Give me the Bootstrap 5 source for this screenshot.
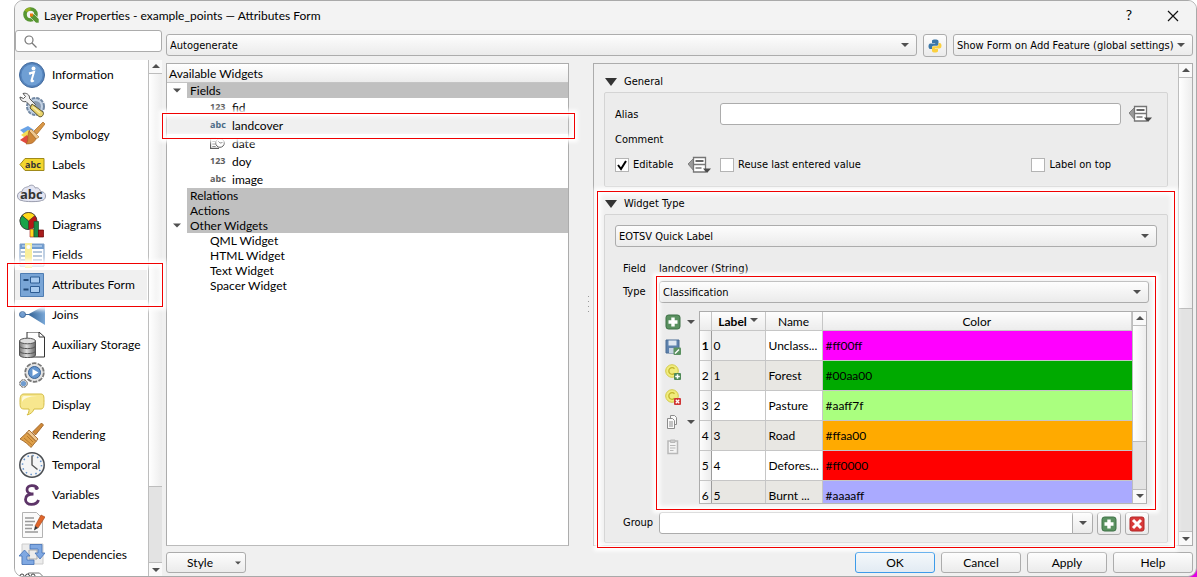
<!DOCTYPE html>
<html lang="en">
<head>
<meta charset="utf-8">
<meta name="viewport" content="width=device-width, initial-scale=1">
<title>Layer Properties - example_points — Attributes Form</title>
<link href="https://cdn.jsdelivr.net/npm/bootstrap@5.3.0/dist/css/bootstrap.min.css" rel="stylesheet">
<style>
  :root {
    --ui-font: Lato, "Open Sans", sans-serif;
    --shell-font: "DejaVu Sans Condensed", "DejaVu Sans", sans-serif;
    --line: #acacac;
    --face: #f0f0f0;
    --caret: url("data:image/svg+xml,%3Csvg xmlns='http://www.w3.org/2000/svg' viewBox='0 0 8 4'%3E%3Cpath d='M0 0h8L4 4z' fill='%23505050'/%3E%3C/svg%3E");
  }
  body {
    font: 12px/15px var(--ui-font);
    color: #000;
    background: #fff linear-gradient(#e400e4, #e400e4) right bottom / 12px 16px no-repeat;
  }
  button, input, select { font: inherit; color: inherit; }
  a { color: #000; text-decoration: none; }

  .dialog-window {
    margin-left: 14px;
    background: var(--face);
    border: 1px solid #a9a9a9;
    border-radius: 9px;
  }
  .title-bar { height: 30px; background: #f3f3f3; border-radius: 8px 8px 0 0; padding: 0 17px 0 8px; gap: 5px; }
  .title-bar h1 { font: 12px/15px var(--ui-font); }
  .title-bar .help-btn { font-size: 14px; margin-right: 30px; }
  .title-bar button, .plain-btn { background: none; border: 0; padding: 0; line-height: 1; }

  /* annotation frames laid over the interface */
  .marked { position: relative; z-index: 2; }
  .marked::after {
    content: "";
    position: absolute;
    inset: var(--out, 0);
    border: 1px solid #f00000;
    box-shadow: 0 0 4px 3px #fff, inset 0 0 4px 3px #fff;
    pointer-events: none;
  }

  /* controls */
  .form-select, .form-control, .push-btn {
    border: 1px solid var(--line);
    border-radius: 3px;
    font-size: 11px;
    line-height: 14px;
    color: #000;
  }
  .form-select, .push-btn { background-color: #f4f4f4; background-image: linear-gradient(#fdfdfd, #ebebeb); }
  .form-select {
    font-family: var(--shell-font);
    height: 22px;
    padding: 4px 16px 2px 3px;
    background-image: var(--caret), linear-gradient(#fdfdfd, #ebebeb);
    background-position: right 7px center, 0 0;
    background-size: 8px 4px, 100% 100%;
    background-repeat: no-repeat;
  }
  .form-control { height: 22px; padding: 3px 4px; background: #fff; }
  .push-btn { height: 21px; width: 80px; padding: 0; font: 12px/15px var(--ui-font); }
  .push-btn.is-default { border-color: #3d9be9; background-image: linear-gradient(#f4f8fb, #e2ebf3); }
  .push-btn.tool-btn { width: 24px; height: 23px; flex: none; }
  .push-btn.drop-btn { width: 21px; height: 22px; line-height: 0; }
  .tick {
    width: 14px; height: 14px; margin: 0; flex: none;
    appearance: none; background: #fff center / 12px no-repeat; border: 1px solid #b4b4b4;
  }
  .tick:checked { background-image: url("data:image/svg+xml,%3Csvg xmlns='http://www.w3.org/2000/svg' viewBox='0 0 12 12'%3E%3Cpath d='M2 6l3 4 5-8' fill='none' stroke='%23000' stroke-width='2'/%3E%3C/svg%3E"); }

  /* scroll bars */
  .scroll-rail { width: 14px; flex: none; background: #e3e3e3; border-left: 1px solid #bdbdbd; }
  .scroll-rail button { height: 14px; background: #f9f9f9; border: 0; padding: 0; line-height: 0; flex: none; }
  .scroll-rail .up { border-bottom: 1px solid #bdbdbd; }
  .scroll-rail .down { border-top: 1px solid #bdbdbd; }
  .scroll-rail .thumb { background: linear-gradient(90deg, #fff, #ededed); border-bottom: 1px solid #bdbdbd; }
  .scroll-rail svg { width: 8px; height: 4px; fill: #505050; }

  /* page list */
  .side-column { width: 147px; flex: none; }
  .search-field { position: relative; }
  .search-field svg { position: absolute; left: 9px; top: 5px; }
  .search-field .form-control { padding-left: 26px; }
  .page-list { background: #fff; overflow-x: visible; overflow-y: clip; border-radius: 0 0 0 8px; }
  .page-list a { height: 30px; padding-left: 4px; gap: 7px; white-space: nowrap; }
  .page-list a svg { width: 26px; height: 26px; flex: none; }
  .page-list .active-page { background: var(--face); margin-right: 1px; --out: -7px -16px -7px -8px; }

  /* widget tree */
  .main-area { min-width: 0; padding: 4px 3px 3px 4px; }
  .toolbar-row { margin-bottom: 6px; }
  .add-form { width: 240px; flex: none; }
  .py-btn { margin: 0 6px; }
  .tree-pane { width: 403px; flex: none; background: #fff; border: 1px solid var(--line); border-bottom-color: #bbb; }
  .tree-head { height: 19px; padding: 2px 2px 0; background: linear-gradient(#fff, #ececec); border-bottom: 1px solid #c4c4c4; line-height: 16px; }
  .tree-pane ul { list-style: none; margin: 0; padding: 0; }
  .branch { margin-left: 20px; padding-left: 3px; background: #c0c0c0; position: relative; }
  .branch svg { position: absolute; left: -14px; top: 5px; width: 8px; height: 5px; fill: #505050; }
  .leaf-field { height: 18px; padding: 1px 0 0 43px; }
  .leaf-field .kind { width: 22px; font: bold 9px/16px "Open Sans", sans-serif; color: #5e5e5e; }
  .leaf-field .kind svg { display: block; }
  .leaf-field.marked { background: var(--face); --out: -3px -7px -5px -5px; }
  .leaf-field.marked .kind { color: #4a6a86; }
  .leaf-plain { padding-left: 43px; }
  .splitter { width: 24px; flex: none; }
  .splitter i { width: 1px; height: 1px; background: #999; }

  /* form pane */
  .form-pane { font: 11px/14px var(--shell-font); border: 1px solid var(--line); color: #000; }
  .form-body { padding: 9px 10px 0 10px; }
  .group-title { height: 19px; padding-left: 1px; gap: 7px; }
  .group-frame { border: 1px solid #d4d4d4; border-radius: 2px; background: #ececec; padding: 10px 10px 12px; }
  .type-frame { padding-bottom: 7px; }
  .comment-line { margin: 8px 0 9px; }
  .field-line { margin: 15px 0 5px; }
  .widget-group { --out: -4px -7px -5px -7px; }
  .classes { --out: -5px -7px -6px -3px; }
  .indented { padding: 0 8px; }
  .caption { width: 36px; flex: none; }
  .type-cap { padding-top: 4px; }
  .alias-cap { width: 105px; flex: none; }
  label.alias-cap { padding-top: 2px; }
  .ontop-cap { margin-right: 46px; }
  .tool-strip { width: 40px; flex: none; padding-left: 6px; }
  .tool-strip > div { height: 25px; padding-top: 3px; gap: 6px; }
  .tool-strip svg { display: block; flex: none; }
  .tool-strip .drop-mark { margin-top: 6px; }
  .grid-view { height: 193px; min-width: 0; border: 1px solid var(--line); background: #fff; overflow: hidden; margin-right: 2px; }
  .grid-view table { font: 12px/15px var(--ui-font); table-layout: fixed; border-collapse: collapse; width: 100%; }
  .grid-view th, .grid-view td { border-right: 1px solid #c6c6c6; border-bottom: 1px solid #c6c6c6; padding: 0 2px; height: 30px; white-space: nowrap; }
  .grid-view thead th { height: 19px; font-weight: 400; text-align: center; background: linear-gradient(#fdfdfd, #ececec); }
  .grid-view tbody th { font-weight: 400; text-align: center; padding: 0; background: linear-gradient(90deg, #fdfdfd, #ececec); border-right-color: #9c9c9c; }
  .grid-view td:nth-child(3) { padding: 0 3px; }
  .grid-view tbody tr:nth-child(even) td { background: #e8e7e3; }
  .grid-view tbody td.swatch, .grid-view tbody tr:nth-child(even) td.swatch { background: var(--c); border-right: 0; padding-left: 3px; }
  .grid-view .col-num { width: 11px; }
  .grid-view .col-label { width: 54px; }
  .grid-view .col-name { width: 57px; }
  .first-cell { background: var(--face); }
  .push-row { padding-top: 6px; gap: 6px; }
  .style-btn { gap: 22px; }
</style>
</head>
<body class="vh-100 overflow-hidden">

<svg class="position-absolute" width="0" height="0" aria-hidden="true">
  <defs>
    <linearGradient id="gGrey" x1="0" y1="0" x2="1" y2="0"><stop offset="0" stop-color="#777"/><stop offset=".45" stop-color="#ddd"/><stop offset="1" stop-color="#666"/></linearGradient>
    <linearGradient id="gJoin" x1="0" y1="0" x2="1" y2="0"><stop offset="0" stop-color="#2f5f92"/><stop offset="1" stop-color="#7aa8d8"/></linearGradient>
  </defs>
  <symbol id="caret" viewBox="0 0 8 4"><path d="M0 0h8L4 4z"/></symbol>
  <symbol id="caretUp" viewBox="0 0 8 4"><path d="M0 4h8L4 0z"/></symbol>
  <symbol id="plus" viewBox="0 0 16 16"><rect x="1" y="1" width="14" height="14" rx="2.5" fill="#5a9160" stroke="#3c7044"/><path d="M8 3.500v9M3.500 8h9" stroke="#fff" stroke-width="3.400"/></symbol>
  <symbol id="override" viewBox="0 0 24 18"><path d="M0 8l6-6v13z" fill="#9a9a9a" stroke="#707070" stroke-width=".8"/><path d="M5.500 1.500h12v14.500h-12z" fill="#fff" stroke="#757575" stroke-width="1.300"/><path d="M7.500 5h8" stroke="#555" stroke-width="1.800"/><path d="M5.500 8.500h12M7.500 12h6" stroke="#777" stroke-width="1.300"/><path d="M15 12.500h8l-4 4.500z" fill="#4a4a4a"/></symbol>
</svg>

<main class="dialog-window vh-100 d-flex flex-column">
  <header class="title-bar d-flex align-items-center">
    <svg width="16" height="16" viewBox="0 0 16 16"><circle cx="7.500" cy="7.500" r="5.500" fill="none" stroke="#589632" stroke-width="3.600"/><path d="M3 4.500A5.500 5.500 0 0 1 7.500 2" fill="none" stroke="#93b023" stroke-width="3"/><path d="M7 7h4l5 5v4h-3L7 10z" fill="#589632" stroke="#f3f3f3" stroke-width=".6"/><path d="M7 6.500h3v3H7z" fill="#ee7913"/></svg>
    <h1 class="m-0">Layer Properties - example_points — Attributes Form</h1>
    <button type="button" class="help-btn ms-auto" aria-label="Help">?</button>
    <button type="button" aria-label="Close"><svg width="12" height="12" viewBox="0 0 12 12"><path d="M1 1l10 10M11 1L1 11" stroke="#111" stroke-width="1.200"/></svg></button>
  </header>

  <div class="d-flex flex-fill" style="min-height:0">
    <!-- pages -->
    <nav class="side-column d-flex flex-column" aria-label="Pages">
      <div class="search-field">
        <svg width="13" height="13" viewBox="0 0 13 13" fill="none" stroke="#777" stroke-width="1.200"><circle cx="5" cy="5" r="4"/><path d="M8 8l4.500 4.500"/></svg>
        <input type="search" class="form-control" aria-label="Search">
      </div>
      <div class="d-flex flex-fill mt-1 pt-1" style="min-height:0">
        <div class="page-list flex-fill">
          <a href="#" class="d-flex align-items-center"><svg viewBox="0 0 26 26"><circle cx="13" cy="13" r="12.500" fill="#5584bd" stroke="#41699c"/><circle cx="13" cy="13" r="10.500" fill="#6f9fd4"/><circle cx="14.500" cy="6.500" r="2" fill="#fff"/><path d="M10 11.500l5-1.500-2.500 8.500c-.3 1.300 1 1 2.200-.3M10 11.500l2 .3" fill="none" stroke="#fff" stroke-width="2"/></svg>Information</a>
          <a href="#" class="d-flex align-items-center"><svg viewBox="0 0 26 26"><circle cx="16.500" cy="14.500" r="8.500" fill="#c3d2e4" stroke="#7288a3" stroke-width="2" stroke-dasharray="3.500 1"/><circle cx="16.500" cy="14.500" r="5.500" fill="#8a9bb0"/><path d="M4 1.500c3-1 7 1 6.500 5l6 6-3.500 3-6-6C4 10.500 1 8 1 5l3.500 1.500 2-2z" fill="#f2f2f2" stroke="#555"/><path d="M13 12l11 8c1.500 2-1 6-4 4.500L11 16z" fill="#e9d36b" stroke="#5e5630"/><path d="M14 15l7 6" stroke="#f8ecac" stroke-width="1.500"/></svg>Source</a>
          <a href="#" class="d-flex align-items-center"><svg viewBox="0 0 26 26"><path d="M1 8l8-4 6 4-7 6z" fill="#6aa3e6"/><path d="M2 13l7-5 6 4-6 6z" fill="#f3dd55"/><path d="M1 18l7-5 6 8-6 1z" fill="#e04a3f"/><path d="M24 0l2 2-8 10-3-3z" fill="#d99747" stroke="#a76a24" stroke-width=".7"/><path d="M12 7l8 8-3 2-7-8z" fill="#f0c890" stroke="#a76a24" stroke-width=".6"/><path d="M10 9l7 8c-2 4-5 5-10 5 3-3 1-8 3-13z" fill="#cf8638" stroke="#9a5f20" stroke-width=".6"/></svg>Symbology</a>
          <a href="#" class="d-flex align-items-center"><svg viewBox="0 0 26 26"><path d="M1 12.500L6 6.500h19v12H6z" fill="#f2d62e" stroke="#a08a1a"/><text x="6" y="15.500" font-family="Open Sans" font-weight="700" font-size="9" fill="#333">abc</text></svg>Labels</a>
          <a href="#" class="d-flex align-items-center"><svg viewBox="0 0 26 26" overflow="visible"><path d="M3 18.500c-6 0-6-9 0-9 1-5 6-4 7-5.500 3-2 6 0 6 2 3-1 5 1 5.500 3.500 7 0 6 9 1 9-2 1.500-17 1.500-19.500 0z" fill="#e3e5f2" stroke="#9a9dae"/><text x="1" y="16.500" font-family="Open Sans" font-weight="700" font-size="13" fill="#333">abc</text></svg>Masks</a>
          <a href="#" class="d-flex align-items-center"><svg viewBox="0 0 26 26"><circle cx="9.500" cy="9" r="8.500" fill="#b81717" stroke="#333" stroke-width=".8"/><path d="M9.500 9L3 3.500A8.500 8.500 0 0 1 16 3.500z" fill="#ffd91c" stroke="#333" stroke-width=".6"/><path d="M9.500 9L3 3.500A8.500 8.500 0 0 0 9.500 17.500z" fill="#19a34a" stroke="#333" stroke-width=".6"/><path d="M11 17h4v8h-4z" fill="#ffd91c" stroke="#a33" stroke-width=".7"/><path d="M15 9.500h4.500V25H15z" fill="#1c8b46" stroke="#14532b" stroke-width=".7"/><path d="M19.500 18h5v7h-5z" fill="#a81c1c" stroke="#600" stroke-width=".7"/></svg>Diagrams</a>
          <a href="#" class="d-flex align-items-center"><svg viewBox="0 0 26 26"><path d="M1 2h24v22H1z" fill="#fff"/><path d="M1 2h24v5H1z" fill="#6f9cd0"/><path d="M3 4h20" stroke="#b7d0ec" stroke-width="1.500"/><path d="M2 10h5M14 10h9M2 14h5M14 14h9M2 18h5M14 18h9M2 22h5M14 22h9" stroke="#6c8fb8"/><path d="M1 2h24v22H1z" fill="none" stroke="#7f9fc6"/><path d="M6 1h7v25H6z" fill="#f9ee9b"/><circle cx="9.500" cy="5" r="2" fill="#fff"/></svg>Fields</a>
          <a href="#" class="d-flex align-items-center active-page marked" aria-current="page"><svg viewBox="0 0 26 26"><path d="M1.500 1.500h23v23h-23z" fill="#79a5d6" stroke="#4f7db2"/><path d="M11.500 5h9v6h-9zM11.500 14.500h9v6h-9z" fill="#a9cbef" stroke="#2d5c93"/><path d="M4.500 8h5M4.500 17.500h5" stroke="#234a78" stroke-width="2"/></svg>Attributes Form</a>
          <a href="#" class="d-flex align-items-center"><svg viewBox="0 0 26 26"><circle cx="3.500" cy="12.500" r="3" fill="#6f9cd0" stroke="#426b9a"/><path d="M6 12.500h5" stroke="#426b9a"/><path d="M9 12.500L26 3v20z" fill="url(#gJoin)"/></svg>Joins</a>
          <a href="#" class="d-flex align-items-center"><svg viewBox="0 0 26 26"><path d="M8 0h12l5.500 5v20H8z" fill="#fff" stroke="#333"/><path d="M20 0v5h5.500" fill="none" stroke="#333"/><path d="M.5 9v14c0 3.500 16 3.500 16 0V9z" fill="url(#gGrey)" stroke="#555"/><ellipse cx="8.500" cy="9" rx="8" ry="2.800" fill="#ddd" stroke="#555"/><path d="M.5 14c0 3.500 16 3.500 16 0M.5 19c0 3.500 16 3.500 16 0" fill="none" stroke="#555"/></svg>Auxiliary Storage</a>
          <a href="#" class="d-flex align-items-center"><svg viewBox="0 0 26 26"><circle cx="15.500" cy="10.500" r="9" fill="#e4e4e4" stroke="#777" stroke-width="2.400" stroke-dasharray="4.500 1.150"/><circle cx="15.500" cy="10.500" r="8.500" fill="#e4e4e4"/><circle cx="15.500" cy="10.500" r="6" fill="#6395cf" stroke="#3b6394"/><path d="M13.500 7l6 3.500-6 3.500z" fill="#fff"/><circle cx="4.500" cy="21.500" r="3.800" fill="#ddd" stroke="#666" stroke-dasharray="2.400 .6"/><circle cx="4.500" cy="21.500" r="2.600" fill="#6f9cd0"/></svg>Actions</a>
          <a href="#" class="d-flex align-items-center"><svg viewBox="0 0 26 26"><path d="M5 2h17c3 0 3 3 3 7s0 8-3 8h-7c-1 3-3 5-7 6 2-2 2-4 2-6H5c-4 0-4-3-4-8s1-7 4-7z" fill="#f7e78e" stroke="#d4bd45"/><path d="M5 4h16c-8 0-16 1-18 6 0-3 0-6 2-6z" fill="#fdf9dc"/></svg>Display</a>
          <a href="#" class="d-flex align-items-center"><svg viewBox="0 0 26 26"><path d="M22.500 1l2 2-8 10-3-3z" fill="#d08a3a" stroke="#95591a" stroke-width=".8"/><path d="M10 8l9 9-2 2.500-9-9z" fill="#f0c890" stroke="#95591a" stroke-width=".8"/><path d="M8 10.500l9 9-5 6C10 23 5 19 1 17z" fill="#dea04a" stroke="#95591a" stroke-width=".8"/><path d="M5 16l8 7M8 14l6 6" stroke="#b87a2c"/></svg>Rendering</a>
          <a href="#" class="d-flex align-items-center"><svg viewBox="0 0 26 26"><circle cx="13" cy="13" r="12.200" fill="#f5f5f5" stroke="#4b4f54" stroke-width="1.500"/><circle cx="13" cy="13" r="9.500" fill="none" stroke="#5f90cc" stroke-width="1.500" stroke-dasharray="1.500 3.480"/><path d="M13 3.500V13l5.500 4.500" fill="none" stroke="#555" stroke-width="1.400"/></svg>Temporal</a>
          <a href="#" class="d-flex align-items-center"><svg viewBox="0 0 26 26"><path d="M18.500 7C17 2 7.500 2.500 8 8c.2 3 3 4 6.500 4-4.500 0-8 1.500-8 5.500 0 6.500 11 6.500 13 .5" fill="none" stroke="#5d3468" stroke-width="2.800"/><circle cx="17.500" cy="6" r="2" fill="#5d3468"/></svg>Variables</a>
          <a href="#" class="d-flex align-items-center"><svg viewBox="0 0 26 26"><path d="M3.500.500h14l6 6v19h-20z" fill="#fafafa" stroke="#b3b3b3"/><path d="M6 6h9M6 9.500h10M6 13h8M6 16.500h7M6 20h13" stroke="#999" stroke-width="1.300"/><path d="M22 3l4 2-7 11-3-2z" fill="#e0662c" stroke="#9d4317" stroke-width=".6"/><path d="M16 14l3 2-4 2.500z" fill="#333"/></svg>Metadata</a>
          <a href="#" class="d-flex align-items-center"><svg viewBox="0 0 26 26"><path d="M3 2h21v20H3z" fill="#ececec" stroke="#ccc"/><path d="M10 8h8v9h-8z" fill="none" stroke="#aaa"/><path d="M11 2.500h12V11h3l-5 6-5-6h3V7h-8z" fill="#7fa8e2" stroke="#4471b5" stroke-width=".8"/><path d="M15 22.500H3V14H0l5.500-6L11 14H8v4h7z" fill="#7fa8e2" stroke="#4471b5" stroke-width=".8"/></svg>Dependencies</a>
          <a href="#" class="d-flex align-items-center" aria-label="Legend"><svg viewBox="0 0 26 26"><path d="M9.500 1h11l4 4v20h-15z" fill="#fff" stroke="#777"/><circle cx="3" cy="4" r="2" fill="none" stroke="#444"/><circle cx="8.500" cy="4" r="2" fill="#fff" stroke="#444"/><circle cx="14" cy="4" r="2" fill="#fff" stroke="#444"/></svg></a>
        </div>
        <div class="scroll-rail d-flex flex-column">
          <button type="button" class="up" aria-label="Scroll up"><svg><use href="#caretUp"/></svg></button>
          <div class="thumb" style="height:80%"></div>
          <button type="button" class="down mt-auto" aria-label="Scroll down"><svg><use href="#caret"/></svg></button>
        </div>
      </div>
    </nav>

    <section class="main-area flex-fill d-flex flex-column">
      <div class="d-flex toolbar-row">
        <select class="form-select" aria-label="Form layout"><option>Autogenerate</option></select>
        <button type="button" class="push-btn tool-btn py-btn" aria-label="Python init function"><svg width="14" height="14" viewBox="0 0 14 14"><path d="M7 .5C3.800.500 4 2 4 2v2h3.200v.6H2.500S.5 4.400.5 7.200s1.800 2.800 1.800 2.800H4V8.500s0-1.800 1.800-1.800h3s1.700 0 1.700-1.700V2.200S10.700.500 7 .500z" fill="#3b77a8"/><path d="M7 13.500c3.200 0 3-1.500 3-1.500v-2H6.800v-.6h4.700s2 .2 2-2.600S11.700 4 11.700 4H10.500v1.500s0 1.800-1.800 1.800h-3S4 7.300 4 9v2.800s-.3 1.700 3 1.700z" fill="#fbd03f"/></svg></button>
        <select class="form-select add-form" aria-label="Show form on add feature"><option>Show Form on Add Feature (global settings)</option></select>
      </div>

      <div class="d-flex flex-fill" style="min-height:0">
        <!-- available widgets -->
        <div class="tree-pane">
          <div class="tree-head">Available Widgets</div>
          <ul>
            <li><div class="branch"><svg><use href="#caret"/></svg>Fields</div>
              <ul>
                <li class="leaf-field d-flex align-items-center"><span class="kind">123</span>fid</li>
                <li class="leaf-field d-flex align-items-center marked"><span class="kind">abc</span>landcover</li>
                <li class="leaf-field d-flex align-items-center"><span class="kind"><svg width="15" height="12" viewBox="0 0 15 12" fill="none" stroke="#5e5e5e"><path d="M.5 1v10.500H9M.5 1.500H6" stroke-width="1.300"/><path d="M2.500 4.500h3M2.500 7h3M2.500 9.500h3" stroke-dasharray="1.200 .6"/><circle cx="10" cy="6" r="4.300" fill="#fff"/><path d="M8 4l2 2 2.500-.5"/></svg></span>date</li>
                <li class="leaf-field d-flex align-items-center"><span class="kind">123</span>doy</li>
                <li class="leaf-field d-flex align-items-center"><span class="kind">abc</span>image</li>
              </ul>
            </li>
            <li><div class="branch">Relations</div></li>
            <li><div class="branch">Actions</div></li>
            <li><div class="branch"><svg><use href="#caret"/></svg>Other Widgets</div>
              <ul>
                <li class="leaf-plain">QML Widget</li>
                <li class="leaf-plain">HTML Widget</li>
                <li class="leaf-plain">Text Widget</li>
                <li class="leaf-plain">Spacer Widget</li>
              </ul>
            </li>
          </ul>
        </div>

        <div class="splitter d-flex flex-column align-items-end justify-content-center gap-1 pe-1"><i></i><i></i><i></i><i></i></div>

        <!-- field settings -->
        <div class="form-pane d-flex flex-fill" style="min-width:0">
          <div class="form-body flex-fill" style="min-width:0">
            <section>
              <div class="group-title d-flex align-items-center"><svg width="12" height="8" viewBox="0 0 12 8"><path d="M0 0h12L6 8z" fill="#333"/></svg>General</div>
              <div class="group-frame">
                <div class="d-flex align-items-center">
                  <label class="alias-cap" for="alias">Alias</label>
                  <input id="alias" type="text" class="form-control">
                  <button type="button" class="plain-btn ms-2 me-1" aria-label="Alias override"><svg width="24" height="18"><use href="#override"/></svg></button>
                </div>
                <div class="comment-line">Comment</div>
                <div class="d-flex align-items-center">
                  <div class="alias-cap d-flex align-items-center">
                    <input id="editable" type="checkbox" class="tick" checked><label class="ms-1" for="editable">Editable</label>
                    <button type="button" class="plain-btn ms-auto me-2" aria-label="Editable override"><svg width="24" height="18"><use href="#override"/></svg></button>
                  </div>
                  <input id="reuse" type="checkbox" class="tick"><label class="ms-1" for="reuse">Reuse last entered value</label>
                  <input id="ontop" type="checkbox" class="tick ms-auto"><label class="ms-1 ontop-cap" for="ontop">Label on top</label>
                </div>
              </div>
            </section>

            <section class="widget-group marked mt-2">
              <div class="group-title d-flex align-items-center"><svg width="12" height="8" viewBox="0 0 12 8"><path d="M0 0h12L6 8z" fill="#333"/></svg>Widget Type</div>
              <div class="group-frame type-frame">
                <select class="form-select" aria-label="Widget type"><option>EOTSV Quick Label</option></select>
                <div class="d-flex field-line indented"><span class="caption">Field</span><span>landcover (String)</span></div>
                <div class="d-flex indented">
                  <label class="caption type-cap" for="classType">Type</label>
                  <div class="classes marked flex-fill" style="min-width:0">
                    <select id="classType" class="form-select"><option>Classification</option></select>
                    <div class="d-flex mt-2">
                      <div class="tool-strip">
                        <div class="d-flex align-items-start"><button type="button" class="plain-btn" aria-label="Add class"><svg width="16" height="16"><use href="#plus"/></svg></button><svg width="8" height="4" class="drop-mark" fill="#505050"><use href="#caret"/></svg></div>
                        <div class="d-flex align-items-start"><button type="button" class="plain-btn" aria-label="Save"><svg width="16" height="16" viewBox="0 0 16 16"><path d="M1 1h13v13H1z" fill="#5d82ae" stroke="#4a6c94"/><path d="M3.500 1.500h8v5h-8z" fill="#dfe8f2"/><path d="M4 9h7v5H4z" fill="#c6d3e2"/><rect x="8.500" y="8.500" width="7.500" height="7.500" rx="1" fill="#5a9160"/><path d="M10 14.500l4-4" stroke="#fff" stroke-width="1.500"/></svg></button></div>
                        <div class="d-flex align-items-start"><button type="button" class="plain-btn" aria-label="Add category"><svg width="16" height="16" viewBox="0 0 16 16"><circle cx="7" cy="7" r="6.300" fill="#f0ec7c" stroke="#d3ca4a"/><path d="M9.500 4.700a3.300 3.300 0 1 0 0 4.600" fill="none" stroke="#c2b52c" stroke-width="1.300"/><rect x="9" y="9" width="7" height="7" rx="1" fill="#4f8a57"/><path d="M12.500 10.200v4.600M10.200 12.500h4.600" stroke="#fff" stroke-width="1.500"/></svg></button></div>
                        <div class="d-flex align-items-start"><button type="button" class="plain-btn" aria-label="Remove category"><svg width="16" height="16" viewBox="0 0 16 16"><circle cx="7" cy="7" r="6.300" fill="#f0ec7c" stroke="#d3ca4a"/><path d="M9.500 4.700a3.300 3.300 0 1 0 0 4.600" fill="none" stroke="#c2b52c" stroke-width="1.300"/><rect x="9" y="9" width="7" height="7" rx="1" fill="#cf3636"/><path d="M10.800 10.800l3.400 3.400M14.200 10.800l-3.400 3.400" stroke="#fff" stroke-width="1.300"/></svg></button></div>
                        <div class="d-flex align-items-start"><button type="button" class="plain-btn" aria-label="Copy"><svg width="16" height="16" viewBox="0 0 16 16" fill="#fafafa" stroke="#8c8c8c"><path d="M5.500 1.500h4l2 2v7h-6z"/><path d="M2.500 4.500h5l2 2v8h-7z"/><path d="M4 8h4M4 10h4M4 12h4"/></svg></button><svg width="8" height="4" class="drop-mark" fill="#505050"><use href="#caret"/></svg></div>
                        <div class="d-flex align-items-start"><button type="button" class="plain-btn" aria-label="Paste" disabled><svg width="16" height="16" viewBox="0 0 16 16" fill="#f4f4f4" stroke="#b8b8b8"><path d="M3 2h9.500v12.500H3z" stroke-width="1.500"/><path d="M5.500 1h4.500v2.500H5.500z" fill="#ccc"/><path d="M5 6.500h5.500M5 9h5.500M5 11.500h3.500"/></svg></button></div>
                      </div>
                      <div class="grid-view d-flex flex-fill">
                        <div class="flex-fill overflow-hidden">
                        <table>
                          <colgroup><col class="col-num"><col class="col-label"><col class="col-name"><col></colgroup>
                          <thead><tr><th aria-label="Row"></th><th class="fw-bold">Label <svg width="8" height="4" class="mb-1" fill="#505050"><use href="#caret"/></svg></th><th>Name</th><th>Color</th></tr></thead>
                          <tbody>
                            <tr><th class="fw-bold">1</th><td class="first-cell">0</td><td>Unclass...</td><td class="swatch" style="--c:#ff00ff">#ff00ff</td></tr>
                            <tr><th>2</th><td>1</td><td>Forest</td><td class="swatch" style="--c:#00aa00">#00aa00</td></tr>
                            <tr><th>3</th><td>2</td><td>Pasture</td><td class="swatch" style="--c:#aaff7f">#aaff7f</td></tr>
                            <tr><th>4</th><td>3</td><td>Road</td><td class="swatch" style="--c:#ffaa00">#ffaa00</td></tr>
                            <tr><th>5</th><td>4</td><td>Defores...</td><td class="swatch" style="--c:#ff0000">#ff0000</td></tr>
                            <tr><th>6</th><td>5</td><td>Burnt ...</td><td class="swatch" style="--c:#aaaaff">#aaaaff</td></tr>
                          </tbody>
                        </table>
                        </div>
                        <div class="scroll-rail d-flex flex-column">
                          <button type="button" class="up" aria-label="Scroll up"><svg><use href="#caretUp"/></svg></button>
                          <div class="thumb" style="height:61%"></div>
                          <button type="button" class="down mt-auto" aria-label="Scroll down"><svg><use href="#caret"/></svg></button>
                        </div>
                      </div>
                    </div>
                  </div>
                </div>
                <div class="d-flex align-items-center indented mt-2">
                  <label class="caption" for="groupBox">Group</label>
                  <div class="input-group flex-fill flex-nowrap w-auto">
                    <input id="groupBox" type="text" class="form-control">
                    <button type="button" class="push-btn drop-btn" aria-label="Open list"><svg width="8" height="4" fill="#505050"><use href="#caret"/></svg></button>
                  </div>
                  <div class="d-flex gap-1 ms-1">
                    <button type="button" class="push-btn tool-btn" aria-label="Add group"><svg width="16" height="16"><use href="#plus"/></svg></button>
                    <button type="button" class="push-btn tool-btn" aria-label="Remove group"><svg width="16" height="16" viewBox="0 0 16 16"><rect x="1" y="1" width="14" height="14" rx="2" fill="#d83a3a" stroke="#b32222"/><path d="M4 4l8 8M12 4l-8 8" stroke="#fff" stroke-width="3"/></svg></button>
                  </div>
                </div>
              </div>
            </section>
          </div>
          <div class="scroll-rail d-flex flex-column">
            <button type="button" class="up" aria-label="Scroll up"><svg><use href="#caretUp"/></svg></button>
            <div class="thumb" style="height:48%"></div>
            <button type="button" class="down mt-auto" aria-label="Scroll down"><svg><use href="#caret"/></svg></button>
          </div>
        </div>
      </div>

      <footer class="d-flex push-row">
        <button type="button" class="push-btn style-btn me-auto d-flex align-items-center justify-content-end px-1">Style<svg width="6" height="4" viewBox="0 0 8 4" fill="#505050"><path d="M0 0h8L4 4z"/></svg></button>
        <button type="button" class="push-btn is-default">OK</button>
        <button type="button" class="push-btn">Cancel</button>
        <button type="button" class="push-btn">Apply</button>
        <button type="button" class="push-btn">Help</button>
      </footer>
    </section>
  </div>
</main>
<script src="https://cdn.jsdelivr.net/npm/bootstrap@5.3.0/dist/js/bootstrap.bundle.min.js"></script>
</body>
</html>
